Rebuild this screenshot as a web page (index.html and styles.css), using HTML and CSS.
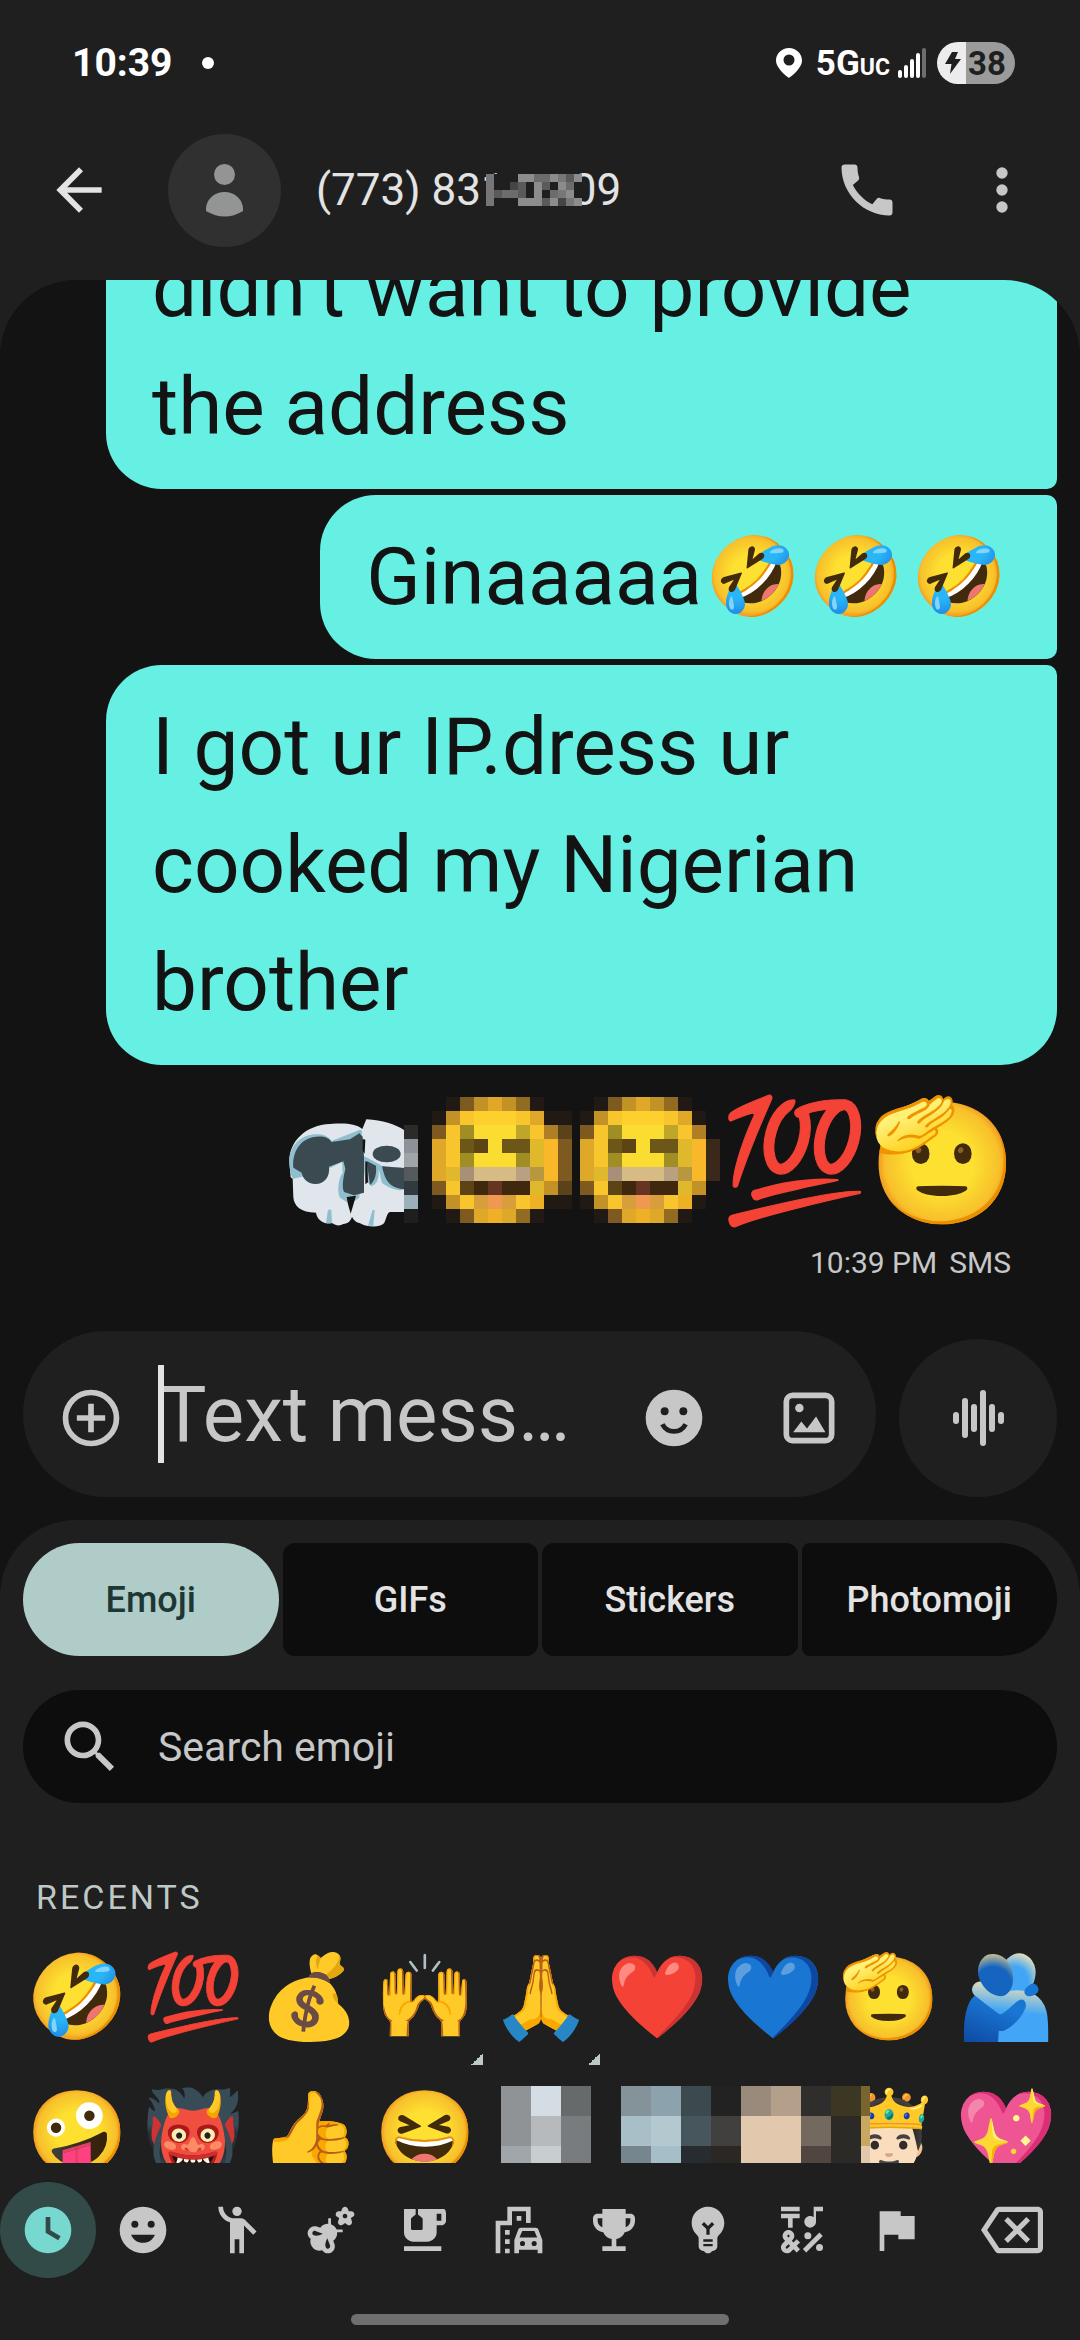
FILE: index.html
```html
<!DOCTYPE html>
<html lang="en">
<head>
<meta charset="utf-8">
<meta name="viewport" content="width=device-width, initial-scale=1">
<title>Messages</title>
<link rel="stylesheet" href="styles.css">
</head>
<body>
<div class="status">
  <span class="status-time">10:39</span>
  <span class="status-dot"></span>
  <div class="status-right">
    <svg class="pin" viewBox="0 0 26 30"><path fill-rule="evenodd" d="M13 0C5.800 0 0 5.600 0 12.500 0 21 13 30 13 30s13-9 13-17.500C26 5.600 20.200 0 13 0zm0 6.500a5.500 5.500 0 1 1 0 11 5.500 5.500 0 0 1 0-11z"/></svg>
    <span class="network">5G<small>UC</small></span>
    <svg class="signal" viewBox="0 0 28 30"><path d="M2 24v4M8 19v9M14 13v15M20 7v21" stroke="#fff" stroke-width="4" stroke-linecap="round"/><path d="M26 2v26" stroke="#6e6e6e" stroke-width="4" stroke-linecap="round"/></svg>
    <span class="battery"><svg class="bolt" viewBox="0 0 16 22"><path d="M7 0h6l-3 7h6L5 22l1.500-10H0z"/></svg>38</span>
  </div>
</div>

<header class="topbar">
  <button class="icon-btn back" aria-label="Back"><svg class="icon" viewBox="0 0 24 24"><path d="M20 11H7.830l5.590-5.590L12 4l-8 8 8 8 1.410-1.410L7.830 13H20z"/></svg></button>
  <svg class="avatar" viewBox="0 0 113 113"><circle cx="56.500" cy="56.500" r="56.500" fill="#303030"/><circle cx="56.500" cy="40.500" r="10.500"/><path d="M38 75a18.500 17 0 0 1 37 0v2q-18 11-37 0z"/></svg>
  <h1 class="contact">(773) 831<svg class="masked" viewBox="0 0 12 4" preserveAspectRatio="none" shape-rendering="crispEdges"><path fill="#1f1f1f" d="M0 0h12v4H0z"/><path fill="#767676" d="M0 0h1v4H0z"/><path fill="#5a5a5a" d="M1 2h1v1H1zM4 1h1v2H4zM7 1h1v1H7zM7 3h1v1H7zM10 0h1v1h-1z"/><path fill="#6c6c6c" d="M2 2h2v1H2zM6 0h2v1H6zM8 2h1v1H8zM10 1h1v1h-1z"/><path fill="#454545" d="M3 1h1v1H3zM9 3h1v1H9z"/><path fill="#8c8c8c" d="M4 0h2v1H4zM4 3h2v1H4zM6 1h1v3H6zM8 0h1v1H8zM8 3h1v1H8zM9 1h1v1H9zM10 2h1v1h-1zM11 0h1v1h-1zM11 3h1v1h-1z"/><path fill="#777" d="M9 0h1v1H9zM9 2h1v1H9zM10 3h1v1h-1z"/></svg>09</h1>
  <button class="icon-btn" aria-label="Call"><svg class="icon" viewBox="0 0 24 24"><path d="M20.010 15.380c-1.230 0-2.420-.2-3.530-.56-.35-.12-.74-.03-1.010.24l-1.570 1.970c-2.830-1.350-5.480-3.900-6.890-6.830l1.950-1.660c.27-.28.35-.67.24-1.020-.37-1.110-.56-2.300-.56-3.530 0-.54-.45-.99-.99-.99H4.190C3.650 3 3 3.240 3 3.990 3 13.280 10.730 21 20.010 21c.71 0 .99-.63.99-1.180v-3.450c0-.54-.45-.99-.99-.99z"/></svg></button>
  <button class="icon-btn more" aria-label="More options"><svg class="icon" viewBox="0 0 24 24"><circle cx="12" cy="6" r="2"/><circle cx="12" cy="12" r="2"/><circle cx="12" cy="18" r="2"/></svg></button>
</header>

<div class="conversation">
  <main class="messages">
    <p class="bubble first">didn’t want to provide<br>the address</p>
    <p class="bubble middle">Ginaaaaa<span class="emoji inline">🤣</span><span class="emoji inline">🤣</span><span class="emoji inline">🤣</span></p>
    <p class="bubble last">I got ur IP.dress ur<br>cooked my Nigerian<br>brother</p>
    <div class="big-emoji">
      <svg class="big-cell" viewBox="18 72 444 444">
        <path fill="#e0e6ec" d="M58 300c0-60 50-108 122-111 45-3 75-2 97 15l12-29c50 3 85 15 113 32v246h-42c-10 2-10 20-18 34-15 14-50 12-72 0-14-4-20-12-24-20-5 14-12 20-26 22-10 6-22 6-32-2-26 3-46-8-50-32-46 0-66-20-68-46l-2-56-6-4z"/>
        <path fill="#8fbfcf" d="M58 300c2-45 30-75 74-80 20-2 42 2 52 20l86-34 6 4-8 200-28 20-30-20c-10-20-4-60 8-75l-2-32-60 30-86 20c-8-10-12-30-12-53zM276 284l16 6 46 26 60 4v68c-30 0-50-14-62-22-4-12-4-24-10-40 0 24 0 40-22 50l-18-20z"/>
        <path fill="#3a4a50" d="M70 320c-4-45 20-90 70-93 20-2 40 4 44 16l56-8 28-18 10 10 4 60v108l-30 8-30-10c-8-20 0-50 4-70l-6-22-43 16c4 30-15 52-40 52-26 0-40-20-42-34zM290 300l28 14c2 24-2 44-18 58zM336 316l66 5v64c-40-5-56-20-66-69z"/>
        <path fill="#131313" d="M278 234l8 2-2 42-6-8zM286 300l6 4 2 60-8 6zM230 408l28-4-16 54-8-28z"/>
        <ellipse cx="350" cy="279" rx="42" ry="25" fill="#3a4a50"/>
        <path fill="#8fbfcf" d="M174 446h10l2 40h-18zM308 446l6 2-4 46h-16z"/>
        <g shape-rendering="crispEdges"><path fill="#1f1f1f" d="M402 192h42v294h-42z"/><path fill="#2b2b2b" d="M402 192h42v42h-42z"/><path fill="#8e9296" d="M402 234h42v42h-42z"/><path fill="#9ea4a8" d="M402 276h42v42h-42z"/><path fill="#545a5e" d="M402 318h42v42h-42z"/><path fill="#303b40" d="M402 360h42v42h-42z"/><path fill="#9bb0b8" d="M402 402h42v42h-42z"/></g>
      </svg>
      <svg class="pixel-face" viewBox="0 0 10 9" shape-rendering="crispEdges">
        <g id="pixels">
          <path fill="#f9c52d" d="M2 1h5v1H2zM1 2h8v1H1zM1 3h8v1H1zM1 4h8v1H1zM1 6h7v1H1zM2 7h5v1H2z"/>
          <path fill="#211913" d="M1 0h1v1H1zM7 0h1v1H7zM0 1h1v1H0zM8 1h2v1H8zM0 7h1v1H0zM8 7h2v1H8zM1 8h1v1H1zM7 8h1v1H7z"/>
          <path fill="#7e5a20" d="M2 0h1v1H2zM0 2h1v1H0zM9 3h1v3H9zM0 6h1v1H0zM2 8h1v1H2z"/>
          <path fill="#916b22" d="M6 0h1v1H6zM6 8h1v1H6z"/>
          <path fill="#c39227" d="M3 0h1v1H3zM5 0h1v1H5zM1 1h1v1H1zM8 6h1v1H8zM1 7h1v1H1z"/>
          <path fill="#dfa828" d="M4 0h1v1H4zM7 1h1v1H7zM0 3h1v3H0zM3 8h1v1H3zM5 8h1v1H5z"/>
          <path fill="#eeb025" d="M4 8h1v1H4zM7 7h1v1H7z"/>
          <path fill="#fdd02e" d="M3 1h3v1H3z"/>
          <path fill="#fbdd31" d="M3 2h3v1H3zM4 3h1v1H4zM3 4h3v1H3z"/>
          <path fill="#a08e24" d="M2 2h1v1H2zM2 4h1v1H2zM6 4h1v1H6z"/>
          <path fill="#bfa628" d="M6 2h1v1H6z"/>
          <path fill="#b07e24" d="M8 2h1v1H8z"/>
          <path fill="#5a421a" d="M9 2h1v1H9zM9 6h1v1H9z"/>
          <path fill="#6c5618" d="M2 3h1v1H2zM5 3h2v1H5z"/>
          <path fill="#5c4414" d="M3 3h1v1H3zM2 6h1v1H2z"/>
          <path fill="#e0b82b" d="M7 3h1v2H7zM1 5h1v1H1zM7 6h1v1H7z"/>
          <path fill="#a89078" d="M2 5h1v1H2z"/>
          <path fill="#d6bc84" d="M3 5h3v1H3z"/>
          <path fill="#b8a080" d="M6 5h1v1H6z"/>
          <path fill="#b8983f" d="M7 5h1v1H7z"/>
          <path fill="#f8b82a" d="M8 3h1v3H8z"/>
          <path fill="#40280e" d="M3 6h1v1H3zM5 6h2v1H5z"/>
          <path fill="#653422" d="M4 6h1v1H4z"/>
          <path fill="#d99e3c" d="M3 7h1v1H3zM5 7h1v1H5z"/>
          <path fill="#f09850" d="M4 7h1v1H4z"/>
        </g>
      </svg>
      <svg class="pixel-face" viewBox="0 0 10 9" shape-rendering="crispEdges"><use href="#pixels"/><path fill="#131313" d="M9 0h1v9H9z"/><path fill="#3a281a" d="M9 3h1v3H9z"/></svg>
      <span class="emoji big-cell">💯</span>
      <span class="emoji big-cell">🫡</span>
    </div>
    <div class="meta"><span>10:39 PM</span><span>SMS</span></div>
  </main>

  <form class="compose">
    <div class="field">
      <button type="button" class="icon-btn" aria-label="Add attachment"><svg class="icon" viewBox="0 0 24 24"><circle cx="12" cy="12" r="9" fill="none" stroke="currentColor" stroke-width="2"/><path d="M11 7h2v4h4v2h-4v4h-2v-4H7v-2h4z"/></svg></button>
      <div class="entry"><span class="caret"></span><input type="text" aria-label="Text message" placeholder="Text mess…"></div>
      <button type="button" class="icon-btn" aria-label="Emoji"><svg class="icon" viewBox="0 0 24 24"><circle cx="12" cy="12" r="10"/><g fill="#1f1f1f"><circle cx="8.700" cy="9.600" r="1.400"/><circle cx="15.300" cy="9.600" r="1.400"/></g><path d="M7.900 14.200a4.600 4.600 0 0 0 8.200 0" fill="none" stroke="#1f1f1f" stroke-width="1.700"/></svg></button>
      <button type="button" class="icon-btn" aria-label="Gallery"><svg class="icon" viewBox="0 0 24 24"><rect x="4" y="4" width="16" height="16" rx="2.200" fill="none" stroke="currentColor" stroke-width="2"/><circle cx="8.600" cy="8.500" r="1.500"/><path d="M6.400 17l2.900-3.800 2 2.500 3.200-4.200 3.300 5.500z"/></svg></button>
    </div>
    <button type="button" class="voice" aria-label="Record voice message"><svg viewBox="-2 0 68 68" class="icon"><path d="M10 31v6M19 17v34M28 23v22M37 9v50M46 23v22M55 31v6" stroke="currentColor" stroke-width="6" stroke-linecap="round"/></svg></button>
  </form>

  <section class="keyboard">
    <div class="tabs">
      <button class="tab selected">Emoji</button>
      <button class="tab">GIFs</button>
      <button class="tab">Stickers</button>
      <button class="tab">Photomoji</button>
    </div>
    <label class="search">
      <svg class="icon" viewBox="0 0 24 24"><path d="M15.500 14h-.79l-.28-.27C15.410 12.590 16 11.110 16 9.500 16 5.910 13.090 3 9.500 3S3 5.910 3 9.500 5.910 16 9.500 16c1.610 0 3.090-.59 4.230-1.570l.27.28v.79l5 4.990L20.490 19l-4.990-5zm-6 0C7.010 14 5 11.990 5 9.500S7.010 5 9.500 5 14 7.010 14 9.500 11.990 14 9.500 14z"/></svg>
      <input type="text" aria-label="Search emoji" placeholder="Search emoji">
    </label>
    <h2 class="section-title">RECENTS</h2>
    <div class="emoji-grid">
      <button class="emoji key">🤣</button>
      <button class="emoji key">💯</button>
      <button class="emoji key">💰</button>
      <button class="emoji key variants">🙌</button>
      <button class="emoji key variants">🙏</button>
      <button class="emoji key">❤️</button>
      <button class="emoji key">💙</button>
      <button class="emoji key">🫡</button>
      <button class="emoji key">🫂</button>
      <button class="emoji key">🤪</button>
      <button class="emoji key">👹</button>
      <button class="emoji key">👍</button>
      <button class="emoji key">😆</button>
      <button class="emoji key king">🤴🏻</button>
      <button class="emoji key">💖</button>
      <svg class="blocks" viewBox="0 0 369 90" shape-rendering="crispEdges">
        <path fill="#1f1f1f" d="M0 0h369v90H0z"/>
        <path fill="#8f9396" d="M0 0h30v60H0z"/><path fill="#a0a6a9" d="M0 60h30v30H0z"/>
        <path fill="#d4dce4" d="M30 0h30v30H30z"/><path fill="#b6babd" d="M30 30h30v30H30z"/><path fill="#c8cdd0" d="M30 60h30v30H30z"/>
        <path fill="#666a6b" d="M60 0h30v30H60z"/><path fill="#787c7f" d="M60 30h30v60H60z"/>
        <path fill="#84929a" d="M120 0h30v30h-30z"/><path fill="#a9bfc8" d="M120 30h30v30h-30z"/><path fill="#75868f" d="M120 60h30v30h-30z"/>
        <path fill="#8ca2ac" d="M150 0h30v30h-30z"/><path fill="#b4c8cf" d="M150 30h30v30h-30z"/><path fill="#a4bfc8" d="M150 60h30v30h-30z"/>
        <path fill="#3c4a50" d="M180 0h30v30h-30z"/><path fill="#46565c" d="M180 30h30v30h-30z"/><path fill="#262c2f" d="M180 60h30v30h-30z"/>
        <path fill="#222" d="M210 0h30v30h-30z"/><path fill="#42403e" d="M210 30h30v30h-30z"/><path fill="#2b2824" d="M210 60h30v30h-30z"/>
        <path fill="#9a8a7c" d="M240 0h30v30h-30z"/><path fill="#b49f8a" d="M270 0h30v30h-30z"/><path fill="#e2c8ac" d="M240 30h60v60h-60z"/>
        <path fill="#2f2e2d" d="M300 0h30v30h-30z"/><path fill="#74695f" d="M300 30h30v30h-30z"/><path fill="#504540" d="M300 60h30v30h-30z"/>
        <path fill="#3c3722" d="M330 0h30v30h-30z"/><path fill="#2b2a26" d="M330 30h30v60h-30z"/>
        <path fill="#7a6430" d="M360 0h9v30h-9z"/><path fill="#c8a860" d="M360 30h9v30h-9z"/><path fill="#e4c8ac" d="M360 60h9v30h-9z"/>
      </svg>
    </div>
    <nav class="categories">
      <div class="category-list">
        <button class="category current" aria-label="Recents"><svg viewBox="0 0 24 24"><circle cx="12" cy="12" r="10"/><path d="M12 6.400v6.200l4.900 2.900" fill="none" stroke="#334b48" stroke-width="2"/></svg></button>
        <button class="category" aria-label="Smileys"><svg viewBox="0 0 24 24"><circle cx="12" cy="12" r="10"/><g fill="#1f1f1f"><circle cx="8.500" cy="9.500" r="1.500"/><circle cx="15.500" cy="9.500" r="1.500"/><path d="M6.900 14h10.200c-.8 2.100-2.800 3.500-5.100 3.500S7.700 16.100 6.900 14z"/></g></svg></button>
        <button class="category" aria-label="People"><svg viewBox="0 0 24 24"><circle cx="12" cy="4" r="2"/><path d="M15.890 8.110C15.500 7.720 14.830 7 13.530 7h-2.540C8.240 6.990 6 4.750 6 2H4c0 3.160 2.110 5.840 5 6.710V22h2v-6h2v6h2V10.050L18.950 14l1.410-1.410z"/></svg></button>
        <button class="category" aria-label="Animals and nature"><svg viewBox="0 0 24 24"><path fill-rule="evenodd" d="M21.940 4.880c-.18-.53-.69-.88-1.260-.88H19.600l-.31-.97C19.150 2.430 18.610 2 18 2s-1.150.43-1.290 1.040L16.400 4h-1.070c-.57 0-1.080.35-1.260.88-.19.56.04 1.170.56 1.480l.87.52-.4 1.240c-.23.58-.04 1.250.45 1.620.5.37 1.170.35 1.640-.06l.81-.68.81.68c.47.41 1.140.43 1.640.06.49-.37.68-1.040.45-1.620l-.39-1.240.87-.52c.51-.31.74-.92.56-1.480zM18 7c-.55 0-1-.45-1-1s.45-1 1-1 1 .45 1 1-.45 1-1 1z"/><path fill-rule="evenodd" d="M13.490 10.510c-.43-.43-.94-.73-1.490-.93V7h-1.200v2.380c-1.060-.06-2.150.32-2.970 1.140-.16.16-.3.34-.43.53L6 10.520c-1.560-.55-3.280.27-3.830 1.820-.27.75-.23 1.570.12 2.290.23.48.58.87 1 1.160-.38 1.350-.06 2.850 1 3.910 1.060 1.060 2.570 1.380 3.910 1 .29.42.68.77 1.160 1 .42.2.85.3 1.290.3.34 0 .68-.06 1.010-.17 1.560-.55 2.380-2.270 1.820-3.850l-.52-1.370c.18-.13.36-.27.53-.43.87-.87 1.240-2.040 1.140-3.170H17v-1.200h-2.590c-.19-.55-.49-.86-.92-1.300zM4.670 14.290c-.25-.09-.45-.27-.57-.51s-.13-.51-.04-.76c.19-.52.76-.79 1.260-.61l3.160 1.190c-1.150.6-2.630 1.110-3.810.69zM10.990 19.930c-.25.09-.52.08-.76-.04-.24-.11-.42-.32-.51-.57-.42-1.180.09-2.650.7-3.800l1.180 3.130c.18.52-.09 1.100-.61 1.280z"/></svg></button>
        <button class="category" aria-label="Food and drink"><svg viewBox="0 0 24 24"><path fill-rule="evenodd" d="M20 3H9v2.400l1.810 1.450c.12.09.19.24.19.39v4.260c0 .28-.22.5-.5.5h-4c-.28 0-.5-.22-.5-.5V7.240c0-.15.07-.3.19-.39L8 5.400V3H3v10c0 2.210 1.790 4 4 4h6c2.210 0 4-1.790 4-4v-3h2c1.110 0 2-.89 2-2V5c0-1.110-.4-2-1-2zm-1 5h-2V5h2zM3 19h16v2H3z"/></svg></button>
        <button class="category" aria-label="Travel and places"><svg viewBox="0 0 24 24"><path d="M17 9V2H7v6H2v14h2V10h5V4h6v5zM11 6h2v2h-2zM6 12h2v2H6zM6 16h2v2H6zM6 20h2v2H6z"/><path fill-rule="evenodd" d="M12.800 11h6.400c.6 0 .9.300 1.100.8L22 16.300V22h-2v-1.500h-8V22h-2v-5.700l1.700-4.500c.2-.5.5-.8 1.100-.8zm.6 1.400L12.200 15.200h7.600l-1.200-2.800zM13.500 16.700a1.100 1.100 0 1 0 0 2.200 1.100 1.100 0 0 0 0-2.200zm5 0a1.100 1.100 0 1 0 0 2.200 1.100 1.100 0 0 0 0-2.200z"/></svg></button>
        <button class="category" aria-label="Activities"><svg viewBox="0 0 24 24"><path fill-rule="evenodd" d="M19 5h-2V3H7v2H5c-1.100 0-2 .9-2 2v1c0 2.550 1.920 4.630 4.390 4.940.63 1.500 1.980 2.630 3.610 2.960V19H7v2h10v-2h-4v-3.100c1.630-.33 2.980-1.460 3.610-2.960C19.080 12.630 21 10.550 21 8V7c0-1.100-.9-2-2-2zM5 8V7h2v3.820C5.840 10.400 5 9.300 5 8zm14 0c0 1.300-.84 2.400-2 2.820V7h2z"/></svg></button>
        <button class="category" aria-label="Objects"><svg viewBox="0 0 24 24"><path fill-rule="evenodd" d="M12 2c-.46 0-.93.04-1.400.14-2.760.53-4.960 2.760-5.480 5.520-.48 2.610.48 5.010 2.220 6.560.43.38.66.91.66 1.470V19c0 1.100.9 2 2 2h.28c.35.6.98 1 1.720 1s1.380-.4 1.720-1H14c1.100 0 2-.9 2-2v-3.310c0-.55.22-1.090.64-1.460C18.090 12.950 19 11.080 19 9c0-3.870-3.130-7-7-7zm2 17h-4v-1h4zm0-2h-4v-1h4zm-1.300-5.400V14h-1.400v-2.400L9.300 9.600l1-1 1.700 1.700 1.700-1.700 1 1z"/></svg></button>
        <button class="category" aria-label="Symbols"><svg viewBox="0 0 24 24"><path d="M3 2h8v2H3zM6 11h2V7h3V5H3v2h3zM12.400 20.180l7.070-7.070 1.410 1.410-7.070 7.070zM15.500 11c1.380 0 2.500-1.120 2.500-2.500V4h3V2h-4v4.510c-.42-.32-.93-.51-1.500-.51-1.380 0-2.500 1.120-2.500 2.500s1.120 2.500 2.500 2.500z"/><circle cx="14.500" cy="14.500" r="1.500"/><circle cx="19.500" cy="19.500" r="1.500"/><path fill-rule="evenodd" d="M9.740 15.960l-1.410 1.410-.71-.71.35-.35c.98-.98.98-2.560 0-3.540-.49-.49-1.130-.73-1.770-.73-.64 0-1.280.24-1.770.73-.98.98-.98 2.560 0 3.540l.35.35-1.060 1.060c-.98.98-.98 2.560 0 3.540.5.5 1.140.74 1.780.74s1.280-.24 1.770-.73l1.060-1.060 1.410 1.410 1.410-1.410-1.410-1.410 1.410-1.410zM5.850 14.190c.1-.1.23-.15.35-.15s.26.05.35.15c.2.2.2.51 0 .71l-.35.35-.35-.36c-.2-.2-.2-.5 0-.7zM5.850 19.840c-.2.2-.5.200-.7 0-.2-.2-.2-.51 0-.71l1.060-1.060.71.71z"/></svg></button>
        <button class="category" aria-label="Flags"><svg viewBox="0 0 24 24"><path d="M5 4h9v2h6v10h-7v-2H7v7H5z"/></svg></button>
      </div>
      <button class="delete" aria-label="Delete"><svg viewBox="0 0 24 24"><path fill-rule="evenodd" d="M22 3H7c-.69 0-1.230.35-1.590.88L0 12l5.410 8.110c.36.53.9.89 1.590.89h15c1.100 0 2-.9 2-2V5c0-1.100-.9-2-2-2zm0 16H7.070L2.400 12l4.660-7H22zm-11.590-2L14 13.410 17.590 17 19 15.590 15.410 12 19 8.410 17.590 7 14 10.590 10.410 7 9 8.410 12.590 12 9 15.590z"/></svg></button>
    </nav>
    <div class="home-bar"></div>
  </section>
</div>
</body>
</html>
```
FILE: styles.css
```css
* { box-sizing: border-box; }

body {
  margin: 0;
  height: 100vh;
  display: flex;
  flex-direction: column;
  overflow: hidden;
  background: #1f1f1f;
  color: #e3e3e3;
  font-family: Roboto, "Noto Color Emoji", sans-serif;
}

button {
  margin: 0;
  padding: 0;
  border: 0;
  background: none;
  color: inherit;
  font: inherit;
}

input {
  width: 100%;
  padding: 0;
  border: 0;
  outline: 0;
  background: none;
  color: #e3e3e3;
  font: inherit;
}

input::placeholder { color: #c7c7c7; opacity: 1; }

svg { display: block; fill: currentColor; flex: none; }

.emoji { font-family: "Noto Color Emoji", sans-serif; }

/* Status bar */
.status {
  height: 126px;
  padding: 0 65px 0 72px;
  display: flex;
  align-items: center;
  color: #fff;
  font-weight: 700;
}
.status-time { font-size: 39px; }
.status-dot { width: 12px; height: 12px; margin-left: 29px; border-radius: 50%; background: #fff; }
.status-right { margin-left: auto; display: flex; align-items: center; }
.pin { width: 26px; height: 30px; }
.network { margin: 0 8px 0 14px; font-size: 35px; }
.network small { font-size: 23px; }
.signal { width: 28px; height: 30px; }
.battery {
  width: 78px;
  height: 42px;
  margin-left: 11px;
  padding-left: 8px;
  display: flex;
  align-items: center;
  gap: 7px;
  border-radius: 21px;
  background: linear-gradient(90deg, #ececec 29px, #9b9b9b 29px);
  color: #1f1f1f;
  font-size: 33px;
}
.bolt { width: 16px; height: 22px; }

/* Top bar */
.topbar {
  height: 154px;
  padding: 0 44px 26px 45px;
  display: flex;
  align-items: center;
}
.icon-btn { flex: none; color: #c7c7c7; }
.icon { width: 68px; height: 68px; }
.back { color: #e3e3e3; }
.avatar { width: 113px; height: 113px; margin: 0 35px 0 55px; color: #929594; }
.contact { flex: 1; margin: 0; display: flex; align-items: center; font-size: 44px; font-weight: 400; }
.masked { position: relative; width: 96px; height: 32px; margin: 0 -10px 0 -20px; }
.more { margin-left: 67px; }

/* Conversation */
.conversation {
  flex: 1;
  min-height: 0;
  display: flex;
  flex-direction: column;
  overflow: hidden;
  border-radius: 76px 76px 0 0;
  background: #131313;
}
.messages {
  flex: 1;
  min-height: 0;
  padding: 0 23px 38px 106px;
  display: flex;
  flex-direction: column;
  justify-content: flex-end;
  align-items: flex-end;
  gap: 6px;
}
.bubble {
  flex: none;
  margin: 0;
  padding: 23px 46px;
  background: #65f0e3;
  color: #131313;
  font-size: 80px;
  line-height: 118px;
}
.first, .last { align-self: stretch; }
.first { border-radius: 56px 56px 10px 56px; }
.middle { border-radius: 56px 10px 10px 56px; display: flex; }
.last { border-radius: 56px 10px 56px 56px; }
.inline { width: 103px; font-size: 77px; text-align: center; }
.big-emoji {
  flex: none;
  display: flex;
  margin: 14px 41px 0 0;
  height: 148px;
}
.big-cell { width: 148px; height: 148px; font-size: 120px; line-height: 152px; text-align: center; }
.pixel-face { width: 140px; height: 126px; margin: 12px 0 0 8px; }
.meta {
  margin-right: 46px;
  margin-top: -6px;
  display: flex;
  gap: 12px;
  color: #c7c7c7;
  font-size: 30px;
  line-height: 60px;
}

/* Compose row */
.compose {
  margin: 0;
  padding: 0 23px 23px;
  display: flex;
  align-items: flex-end;
  gap: 23px;
}
.field {
  flex: 1;
  min-width: 0;
  height: 166px;
  padding: 0 33px 0 34px;
  display: flex;
  align-items: center;
  gap: 67px;
  border-radius: 83px;
  background: #1f1f1f;
}
.field .icon-btn { padding-top: 8px; }
.entry { position: relative; flex: 1; min-width: 0; margin-left: -32px; font-size: 78px; }
.caret { position: absolute; top: 50%; left: -2px; width: 6px; height: 98px; margin-top: -49px; background: #e3e3e3; }
.voice {
  width: 158px;
  height: 158px;
  display: flex;
  align-items: center;
  justify-content: center;
  border-radius: 50%;
  background: #1f1f1f;
  color: #c7c7c7;
}

/* Emoji keyboard */
.keyboard {
  padding-top: 23px;
  border-radius: 76px 76px 0 0;
  background: #1f1f1f;
}
.tabs {
  margin: 0 23px 34px;
  display: grid;
  grid-template-columns: repeat(4, 1fr);
  gap: 4px;
}
.tab {
  height: 113px;
  border-radius: 12px;
  background: #0d0d0d;
  font-size: 36px;
  font-weight: 500;
}
.tab.selected { border-radius: 57px; background: #b0ccc8; color: #1c3734; }
.tab:last-child { border-radius: 8px 57px 57px 8px; }
.search {
  height: 113px;
  margin: 0 23px;
  padding: 0 33px;
  display: flex;
  align-items: center;
  gap: 34px;
  border-radius: 57px;
  background: #0d0d0d;
  color: #c7c7c7;
  font-size: 41px;
}
.section-title {
  margin: 62px 36px 0;
  color: #bec9c7;
  font-size: 34px;
  font-weight: 400;
  line-height: 64px;
  letter-spacing: 3px;
}
.emoji-grid {
  height: 234px;
  margin: 0 16px 0 19px;
  display: grid;
  grid-template-columns: repeat(9, 1fr);
  grid-auto-rows: 136px;
  overflow: hidden;
}
.key { font-size: 82px; line-height: 134px; text-align: center; }
.variants { background: linear-gradient(135deg, transparent 50%, #bec9c7 50%) right bottom / 12px 12px no-repeat; }
.king { grid-row: 2; grid-column: 8; }
.blocks {
  position: relative;
  grid-row: 2;
  grid-column: 5 / span 4;
  width: 369px;
  height: 90px;
  margin: 21px 0 0 18px;
}
.categories {
  padding-top: 19px;
  display: grid;
  grid-template-columns: 943fr 137fr;
  align-items: center;
  color: #c7c7c7;
}
.category-list { display: flex; }
.category {
  flex: 1;
  height: 96px;
  display: flex;
  align-items: center;
  justify-content: center;
}
.category svg { width: 56px; height: 56px; }
.category.current { flex: none; width: 96px; border-radius: 50%; background: #334b48; color: #76d8cf; }
.delete svg { width: 62px; height: 62px; margin: 0 auto; }
.home-bar {
  width: 35%;
  height: 11px;
  margin: 36px auto 15px;
  border-radius: 6px;
  background: #6f6f6f;
}
```
